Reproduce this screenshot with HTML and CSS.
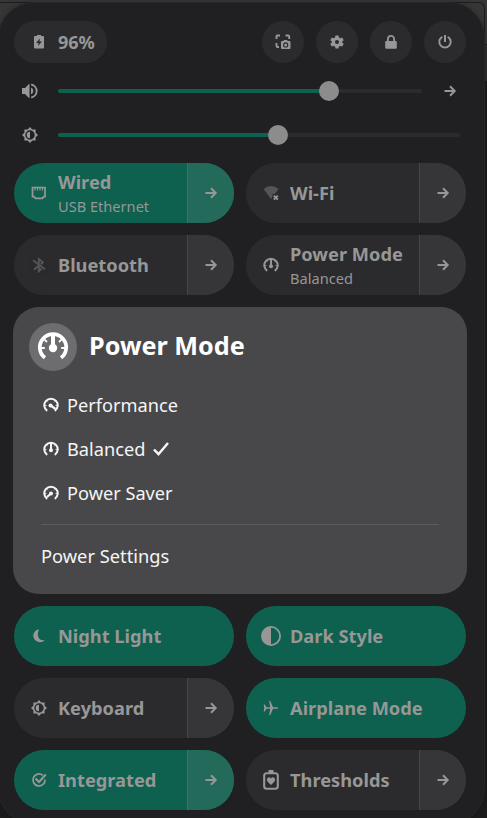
FILE: index.html
```html
<!DOCTYPE html>
<html lang="en">
<head>
<meta charset="utf-8">
<title>Quick Settings</title>
<link rel="stylesheet" href="styles.css">
</head>
<body>
<svg class="defs" width="0" height="0" aria-hidden="true">
  <symbol id="arrow" viewBox="0 0 16 16"><path d="M2.500 8h10M8 3.300L12.700 8 8 12.700" fill="none" stroke="currentColor" stroke-width="2"/></symbol>
  <symbol id="brightness" viewBox="0 0 16 16"><path fill="currentColor" fill-rule="evenodd" d="M8 0l2.300 2.400h3.300v3.300L16 8l-2.400 2.300v3.300h-3.300L8 16l-2.300-2.400H2.400v-3.300L0 8l2.400-2.300V2.400h3.300zM8 3.300a4.700 4.700 0 1 0 0 9.400A4.700 4.700 0 0 0 8 3.300z"/><path d="M8 4.700a3.300 3.300 0 0 0 0 6.600z" fill="currentColor"/></symbol>
  <symbol id="dial" viewBox="0 0 16 16"><path d="M4.200 13.900A6.700 6.700 0 1 1 11.800 13.900" fill="none" stroke="currentColor" stroke-width="2"/><path d="M1 8.500h2.500M12.500 8.500H15M3.200 3.700l1.500 1.500M12.800 3.700l-1.500 1.500" stroke="currentColor" stroke-width=".8"/></symbol>
</svg>
<div class="window-edge"></div>
<main class="panel">
  <header class="topbar">
    <div class="battery">
      <svg class="icon" viewBox="0 0 16 16"><path fill="currentColor" fill-rule="evenodd" d="M6 1h4v1h2q1 0 1 1v10.500q0 1-1 1H4q-1 0-1-1V3q0-1 1-1h2zM8.800 4.500L5 9h2.500L7 12l4-4.500H8.500z"/></svg>
      <span>96%</span>
    </div>
    <nav class="actions">
      <button><svg class="icon" viewBox="0 0 16 16"><path d="M1.500 5V2.500q0-1 1-1H5M10.500 1.500h2.700q1 0 1 1V5M1.500 9v3q0 1 1 1H4" fill="none" stroke="currentColor" stroke-width="1.900"/><path fill="currentColor" fill-rule="evenodd" d="M8.300 7l.7-1h3l.7 1H14.500q1 0 1 1v6q0 1-1 1H7q-1 0-1-1V8q0-1 1-1zM10.700 8.300a2.600 2.600 0 1 0 0 5.200 2.600 2.600 0 0 0 0-5.200z"/><circle cx="10.700" cy="10.900" r="1.500" fill="currentColor"/></svg></button>
      <button><svg class="icon" viewBox="0 0 16 16"><path fill="currentColor" fill-rule="evenodd" d="M6.500 1.500h3l.5 2 1.200.7 2-.6 1.500 2.600L13.200 7.600v1l1.500 1.300-1.500 2.600-2-.6-1.200.7-.5 2h-3l-.5-2-1.200-.7-2 .6-1.500-2.600 1.500-1.300v-1L1.300 6.200l1.500-2.600 2 .6L6 3.500zM8 6a2 2 0 1 0 0 4 2 2 0 0 0 0-4z"/></svg></button>
      <button><svg class="icon" viewBox="0 0 16 16"><rect x="2.200" y="7" width="11.600" height="7.700" rx="1" fill="currentColor"/><path d="M4.900 8V5a3.100 3.100 0 0 1 6.200 0v3" fill="none" stroke="currentColor" stroke-width="1.800"/></svg></button>
      <button><svg class="icon" viewBox="0 0 16 16"><path d="M4.700 3.200a5.700 5.700 0 1 0 6.600 0" fill="none" stroke="currentColor" stroke-width="1.900" stroke-linecap="round"/><path d="M8 1v7" stroke="currentColor" stroke-width="2"/></svg></button>
    </nav>
  </header>

  <section class="slider-row">
    <svg class="icon" viewBox="0 0 16 16"><path d="M0 5h3l4-4h.5v14H7l-4-4H0z" fill="currentColor"/><path d="M9.200 1.500a6.600 6.600 0 0 1 0 13" fill="none" stroke="currentColor" stroke-width="1.900"/><path d="M9 4.500a3.800 3.800 0 0 1 0 7z" fill="currentColor"/></svg>
    <div class="track"><div class="level" style="width:271.400px"></div><div class="knob"></div></div>
    <svg class="icon slider-arrow"><use href="#arrow"/></svg>
  </section>
  <section class="slider-row">
    <svg class="icon"><use href="#brightness"/></svg>
    <div class="track"><div class="level" style="width:220px"></div><div class="knob"></div></div>
  </section>

  <section class="tiles first">
    <div class="tile on">
      <svg class="icon" viewBox="0 0 16 16"><path d="M1.500 2.500h12.500v9.200h-1.200l-1.500 1.600H4.500L3 11.700H1.500z" fill="none" stroke="currentColor" stroke-width="1.700"/><path d="M4 2v3.400M6.500 2v3.400M9 2v3.400M11.500 2v3.400" stroke="currentColor" stroke-width="1.200"/></svg>
      <div class="label"><b>Wired</b><small>USB Ethernet</small></div><span class="more"><svg class="icon"><use href="#arrow"/></svg></span>
    </div>
    <div class="tile">
      <svg class="icon" viewBox="0 0 16 16"><path class="dim" d="M.5 4Q8-2 15.500 4L8 14z" fill="currentColor"/><rect class="cutout" x="9.500" y="9" width="7" height="7"/><path d="M10.800 10.700l4 4M14.800 10.700l-4 4" stroke="currentColor" stroke-width="1.900"/></svg>
      <div class="label"><b>Wi-Fi</b></div><span class="more"><svg class="icon"><use href="#arrow"/></svg></span>
    </div>
    <div class="tile">
      <svg class="icon dim" viewBox="0 0 16 16"><path d="M2 3.300l12 9M3 12.700l4.500-4M7.800 7V2l4 3.300L9.800 7.200M7.800 8.500v5.700l2.800-2.500" fill="none" stroke="currentColor" stroke-width="1.900"/></svg>
      <div class="label"><b>Bluetooth</b></div><span class="more"><svg class="icon"><use href="#arrow"/></svg></span>
    </div>
    <div class="tile">
      <svg class="icon" viewBox="0 0 16 16"><use href="#dial"/><path d="M8 2v7" stroke="currentColor" stroke-width="2"/><circle cx="8" cy="9.200" r="2" fill="currentColor"/></svg>
      <div class="label"><b>Power Mode</b><small>Balanced</small></div><span class="more"><svg class="icon"><use href="#arrow"/></svg></span>
    </div>
  </section>

  <section class="menu">
    <div class="menu-head">
      <span class="badge"><svg viewBox="0 0 32 32"><path d="M8 26.800A13.200 13.200 0 1 1 24 26.800" fill="none" stroke="currentColor" stroke-width="3.700"/><path d="M4 17h3.800M24.200 17H28M7.300 8.300l2.700 2.700M24.700 8.300L22 11" stroke="currentColor" stroke-width="1.800"/><path d="M14 3h4v12h-4z" fill="currentColor"/><circle cx="16" cy="17" r="4.200" fill="currentColor"/></svg></span>
      <h1>Power Mode</h1>
    </div>
    <ul>
      <li><svg class="icon" viewBox="0 0 16 16"><use href="#dial"/><path d="M7 8l5.500 4" stroke="currentColor" stroke-width="2.200"/><circle cx="7.500" cy="8.500" r="2" fill="currentColor"/></svg>Performance</li>
      <li><svg class="icon" viewBox="0 0 16 16"><use href="#dial"/><path d="M8 2v7" stroke="currentColor" stroke-width="2"/><circle cx="8" cy="9.200" r="2" fill="currentColor"/></svg>Balanced<svg class="icon" viewBox="0 0 16 16"><path d="M1 8.500l4.500 4.700L15 2" fill="none" stroke="currentColor" stroke-width="2.500"/></svg></li>
      <li><svg class="icon" viewBox="0 0 16 16"><use href="#dial"/><path d="M8.500 8L4 12" stroke="currentColor" stroke-width="2.200"/><circle cx="8" cy="8.500" r="2" fill="currentColor"/></svg>Power Saver</li>
    </ul>
    <hr>
    <p>Power Settings</p>
  </section>

  <section class="tiles">
    <div class="tile on">
      <svg class="icon" viewBox="0 0 16 16"><path d="M6.800 1.500A6.600 6.600 0 1 0 13.800 12.200Q8 13 7 7.800 6.500 4.500 8 1.500z" fill="currentColor"/></svg>
      <div class="label"><b>Night Light</b></div>
    </div>
    <div class="tile on wide-icon">
      <svg class="icon" viewBox="0 0 20 20"><circle cx="10" cy="10" r="9.100" fill="none" stroke="currentColor" stroke-width="1.800"/><path d="M10 1a9 9 0 0 0 0 18z" fill="currentColor"/></svg>
      <div class="label"><b>Dark Style</b></div>
    </div>
    <div class="tile">
      <svg class="icon"><use href="#brightness"/></svg>
      <div class="label"><b>Keyboard</b></div><span class="more"><svg class="icon"><use href="#arrow"/></svg></span>
    </div>
    <div class="tile on">
      <svg class="icon" viewBox="0 0 16 16"><path d="M.7 4.500h1L3.500 7.200H7.200L6.200.7h1L10 7.200h4.500q1.400.8 0 1.600H10L7.200 15.300h-1l1-6.500H3.500L1.700 11.500h-1L1.300 8z" fill="currentColor"/></svg>
      <div class="label"><b>Airplane Mode</b></div>
    </div>
    <div class="tile on">
      <svg class="icon" viewBox="0 0 16 16"><path d="M11.800 3.300A6 6 0 1 0 14 7.500" fill="none" stroke="currentColor" stroke-width="1.700"/><path d="M4.500 6.500L8 10l6.800-7.500" fill="none" stroke="currentColor" stroke-width="2"/></svg>
      <div class="label"><b>Integrated</b></div><span class="more"><svg class="icon"><use href="#arrow"/></svg></span>
    </div>
    <div class="tile wide-icon">
      <svg class="icon" viewBox="0 0 20 20"><rect x="3.200" y="3.200" width="13.600" height="15.600" rx="2.500" fill="none" stroke="currentColor" stroke-width="2.100"/><path d="M7.500 0h5v3h-5z" fill="currentColor"/><path d="M10 15L6.500 11.500Q5 9.500 6.500 8q2-1.500 3.500.5 1.500-2 3.500-.5 1.500 1.500 0 3.500z" fill="currentColor"/></svg>
      <div class="label"><b>Thresholds</b></div><span class="more"><svg class="icon"><use href="#arrow"/></svg></span>
    </div>
  </section>
</main>
</body>
</html>
```
FILE: styles.css
```css
* { box-sizing: border-box; }

body {
  margin: 0;
  width: 487px;
  height: 818px;
  overflow: hidden;
  position: relative;
  background: linear-gradient(#363636 0 44px, #1d1d1d 44px 45px, #2c2c2c 45px 81px, #1b1b1c 81px);
  color: #979797;
  font-family: "Noto Sans", sans-serif;
}

.defs { position: absolute; }

.window-edge {
  position: absolute;
  inset: 2px 2px auto -10px;
  height: 90px;
  border: 1px solid #1c1c1c;
  border-bottom: 0;
  border-radius: 6px;
}

.panel {
  position: relative;
  width: 487px;
  height: 823px;
  margin: 2px 0 0 -2px;
  padding: 18px 18px 0 15px;
  border: 1px solid #272729;
  border-radius: 36px;
  background: #202022;
  box-shadow: 0 0 5px rgba(0, 0, 0, .2);
}

.icon { display: block; flex: none; width: 16px; height: 16px; }

.topbar { display: flex; justify-content: space-between; height: 42px; }

.battery {
  display: flex;
  align-items: center;
  gap: 11px;
  width: 93px;
  padding-left: 17px;
  border-radius: 21px;
  background: #2b2b2d;
  font-size: 18px;
  font-weight: 700;
}

.actions { display: flex; gap: 12px; }

.actions button {
  display: grid;
  place-items: center;
  width: 42px;
  height: 42px;
  padding: 0;
  border: 0;
  border-radius: 50%;
  background: #2b2b2d;
  color: inherit;
}

.slider-row {
  display: flex;
  align-items: center;
  height: 44px;
  margin-top: 6px;
  padding: 0 6px 0 8px;
}

.slider-row + .slider-row { margin-top: 0; }

.track {
  display: flex;
  align-items: center;
  flex: 1;
  height: 4px;
  margin-left: 20px;
  border-radius: 2px;
  background: #2b2b2d;
}

.level { flex: none; height: 4px; border-radius: 2px; background: #0e6150; }

.knob { flex: none; width: 20px; height: 20px; margin-left: -10px; border-radius: 50%; background: #8c8c8c; }

.slider-arrow { margin: 0 2px 0 20px; }

.tiles { display: grid; grid-template-columns: 220px 220px; gap: 12px; }

.tiles.first { margin-top: 6px; }

.tile {
  display: flex;
  align-items: center;
  height: 60px;
  padding-left: 17px;
  overflow: hidden;
  border-radius: 30px;
  background: #2b2b2d;
}

.tile.on { background: #0e604f; }

.label { flex: 1; margin-left: 11px; white-space: nowrap; }

.label b { display: block; padding-bottom: 2px; font-size: 18.25px; line-height: 23px; }

.label small { display: block; font-size: 14.6px; line-height: 20px; margin-top: 1px; }

.wide-icon { padding-left: 15px; }

.wide-icon .icon { width: 20px; height: 20px; }

.wide-icon .label { margin-left: 9px; }

.more {
  display: grid;
  place-items: center;
  width: 47px;
  height: 60px;
  border-left: 1px solid #454547;
  background: #363638;
}

.wide-icon .more .icon { width: 16px; height: 16px; }

.tile.on .more { border-color: #32786a; background: #236a5b; }

.dim { opacity: .4; }

.cutout { fill: #2b2b2d; }

.menu {
  height: 287px;
  margin: 12px 0 12px -1px;
  padding: 16px 28px 0;
  width: 454px;
  border-radius: 26px;
  background: #48484a;
  color: #f5f5f5;
  font-size: 18.2px;
}

.menu-head { display: flex; align-items: center; gap: 12px; margin-left: -12px; color: #fff; }

.badge { display: grid; place-items: center; width: 48px; height: 48px; border-radius: 50%; background: #6d6d6f; }

.badge svg { width: 32px; height: 32px; }

.menu h1 { margin: -5px 0 0; font-size: 25.2px; line-height: 34px; }

.menu ul { margin: 12px 0 9px; padding: 0; list-style: none; }

.menu li { display: flex; align-items: center; gap: 8px; height: 44px; padding-left: 2px; }

.menu hr { height: 1px; margin: 0; border: 0; background: #5b5b5d; }

.menu p { margin: 9px 0 0; font-size: 18.3px; line-height: 44px; }
```
